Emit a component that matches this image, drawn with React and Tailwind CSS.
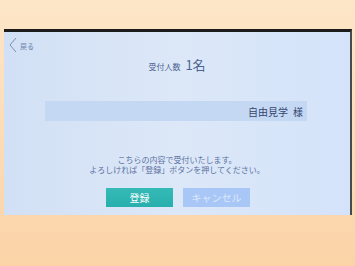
export default function App() {
  return (
    <div
      className="w-[355px] h-[266px] overflow-hidden bg-gradient-to-b from-[#fde6c8] via-[#fcdcb6] to-[#fbd3a7] pt-[29px] pl-[4px] pr-[3px]"
      style={{ fontFamily: '"Noto Sans CJK JP", "Noto Sans", sans-serif' }}
    >
      {/* screen */}
      <div className="h-[186px] flex flex-col bg-gradient-to-r from-[#d2e0f5] via-[#dce8f8] to-[#d4e3fa] border-t-[3px] border-t-[#1c1c1c] border-r-[2px] border-r-[#4a4a4a]">
        {/* back */}
        <div className="mt-[5px] h-[16px] pl-[5px] flex items-center gap-[3px] text-[#6d82ad]">
          <svg width="8" height="16" viewBox="0 0 8 16" fill="none">
            <path d="M7 1 L1 8 L7 15" stroke="#7a8fb8" strokeWidth="1" />
          </svg>
          <span className="text-[7px] leading-none mt-[2px]">戻る</span>
        </div>

        {/* title */}
        <div className="mt-[4px] h-[16px] flex items-end justify-center gap-[5px] text-[#4e6391]">
          <span className="text-[8px] leading-[12px]">受付人数</span>
          <span className="text-[13px] leading-[16px]">1名</span>
        </div>

        {/* name bar */}
        <div className="mt-[28px] ml-[41px] w-[262px] h-[20px] bg-[#c4d8f4] flex items-center justify-end gap-[5px] pr-[4px] text-[10px] text-[#34466e]">
          <span>自由見学</span>
          <span>様</span>
        </div>

        {/* message */}
        <div className="mt-[34px] flex flex-col items-center text-[8px] leading-[10px] text-[#5b70a0]">
          <span>こちらの内容で受付いたします。</span>
          <span>よろしければ「登録」ボタンを押してください。</span>
        </div>

        {/* buttons */}
        <div className="mt-[13px] flex justify-center gap-[10px] pl-[2px]">
          <button className="w-[67px] h-[19px] bg-gradient-to-b from-[#35bab6] to-[#27afad] text-white text-[10px] leading-none">
            登録
          </button>
          <button className="w-[67px] h-[19px] bg-[#a8c6f6] text-[#dce9fc] text-[10px] leading-none">
            キャンセル
          </button>
        </div>
      </div>
    </div>
  );
}
